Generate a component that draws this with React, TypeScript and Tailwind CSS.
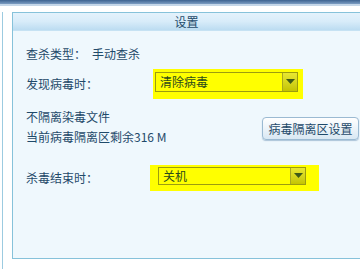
import React from 'react';

function YellowSelect({
  value,
  outer,
  inner,
}: {
  value: string;
  outer: string;
  inner: string;
}) {
  return (
    <div className={`bg-[#ffff00] ${outer}`}>
      <div className={`flex border border-[#9c9c10] bg-[#ffff00] ${inner}`}>
        <span className="flex-1 pl-[4px] text-[12px] leading-none text-[#2b4a1c] self-center">{value}</span>
        <div className="w-[15px] flex items-center justify-center border-l border-[#a8a820] bg-gradient-to-b from-[#e8e830] to-[#c4c400]">
          <svg width="9" height="6" viewBox="0 0 9 6">
            <polygon points="0,0 9,0 4.5,5" fill="#3e5a18" />
          </svg>
        </div>
      </div>
    </div>
  );
}

export default function App() {
  return (
    <div
      className="w-[360px] h-[269px] bg-white flex flex-col overflow-hidden"
      style={{ fontFamily: '"Noto Sans CJK SC", "Liberation Sans", sans-serif' }}
    >
      {/* top strip */}
      <div className="h-[4px] bg-gradient-to-b from-[#3c6290] to-[#7c9dc2]" />
      <div className="h-[2px] bg-[#c4d6e8]" />

      <div className="flex flex-1 min-h-0">
        {/* left gutter */}
        <div className="w-[12px] flex pt-[6px]">
          <div className="ml-[2px] w-[1px] h-full bg-[#9ccbe0]" />
        </div>

        <div className="flex-1 pt-[6px] pb-[10px] flex flex-col">
          {/* panel */}
          <div className="flex-1 flex flex-col border-l border-t border-b border-[#86c2da] bg-[#eff8fd]">
            <div className="h-[18px] flex items-center justify-center bg-gradient-to-b from-[#e4f2fc] via-[#d8ecf9] to-[#bcdcf1] border-b border-[#c6e2f3] text-[12px] text-[#1f4a6a]">
              设置
            </div>

            <div className="pl-[13px] flex flex-col text-[12px] text-[#1f4a6a]">
              <div className="mt-[16px] h-[14px] flex items-center">
                <span>查杀类型：</span>
                <span className="ml-[6px]">手动查杀</span>
              </div>

              <div className="mt-[8px] h-[30px] flex items-center">
                <span className="w-[127px]">发现病毒时：</span>
                <YellowSelect value="清除病毒" outer="w-[150px] h-[30px] pl-[2px] pt-[3px]" inner="w-[143px] h-[20px]" />
              </div>

              <div className="mt-[11px] flex justify-between items-start">
                <div className="flex flex-col gap-[6px]">
                  <span className="h-[14px] leading-[14px]">不隔离染毒文件</span>
                  <span className="h-[14px] leading-[14px]">当前病毒隔离区剩余316 M</span>
                </div>
                <button className="mt-[7px] mr-[1px] w-[97px] h-[23px] rounded-[4px] border border-[#9bbad2] bg-gradient-to-b from-white to-[#d9e8f3] shadow-[0_1px_1px_rgba(90,130,170,0.45)] text-[12px] text-[#1f4a6a]">
                  病毒隔离区设置
                </button>
              </div>

              <div className="mt-[21px] h-[26px] flex items-center">
                <span className="w-[124px]">杀毒结束时：</span>
                <YellowSelect value="关机" outer="w-[169px] h-[26px] pl-[8px] pt-[2px]" inner="w-[148px] h-[18px]" />
              </div>
            </div>
          </div>
        </div>
      </div>
    </div>
  );
}
